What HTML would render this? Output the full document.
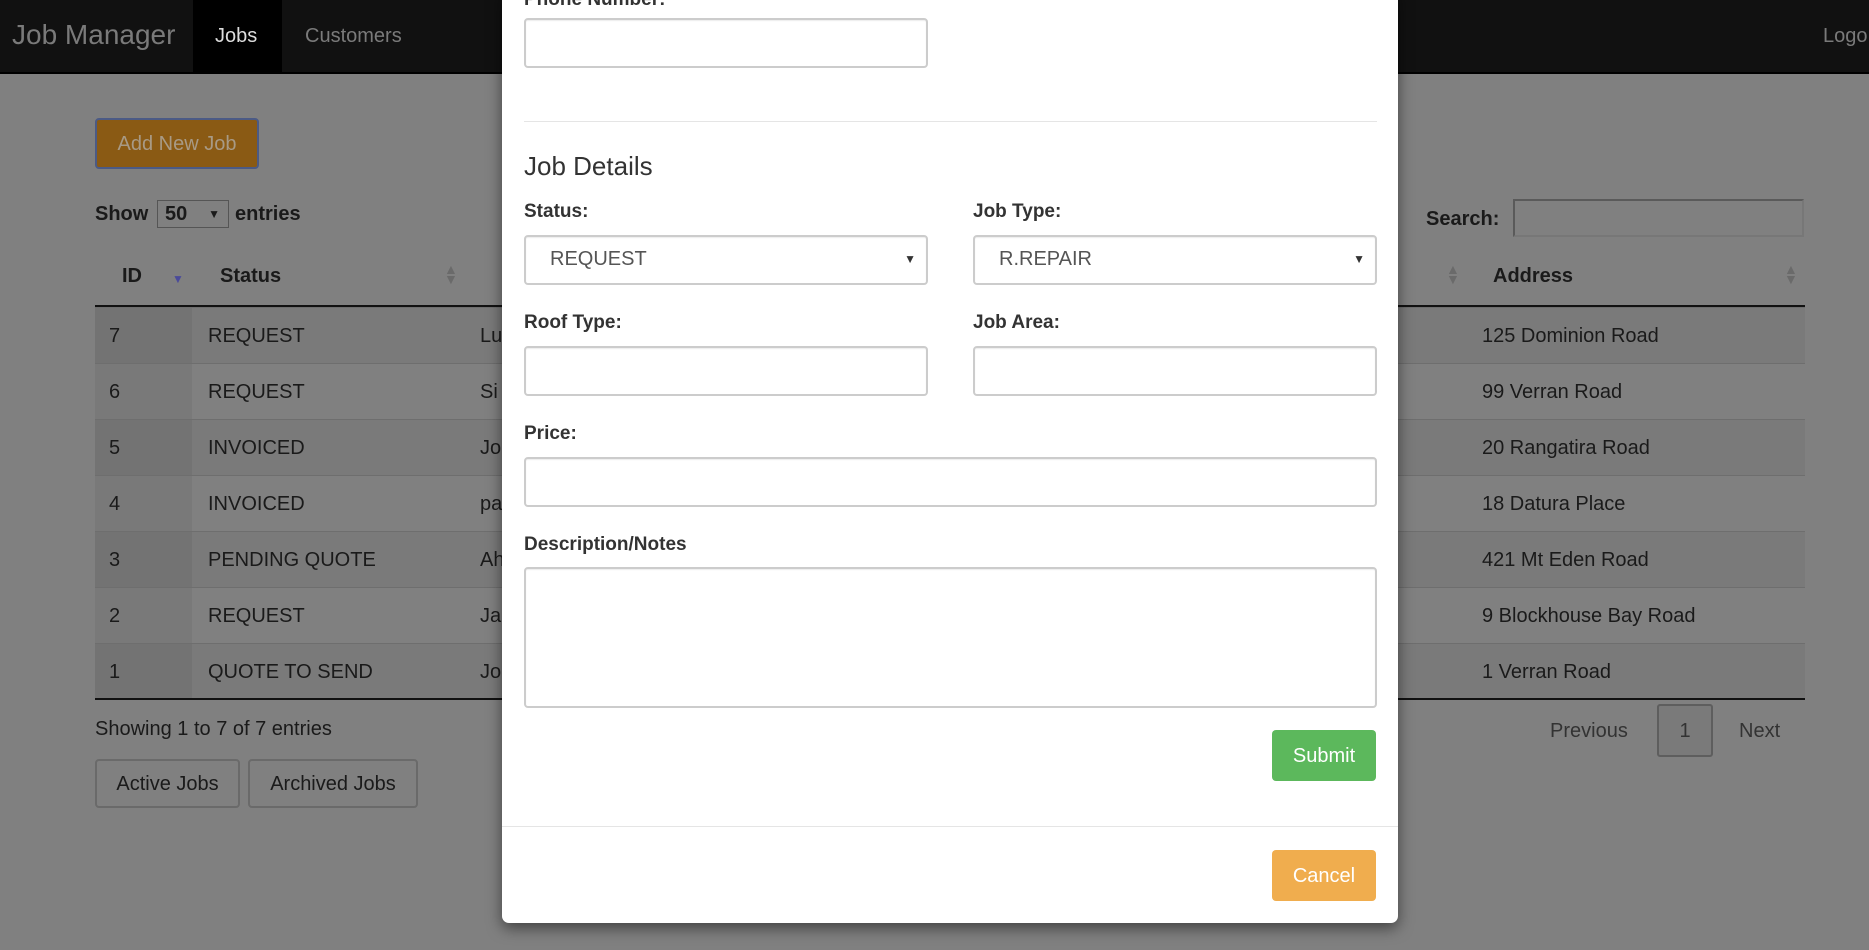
<!DOCTYPE html>
<html><head><meta charset="utf-8"><style>
*{box-sizing:border-box;margin:0;padding:0}
body{width:1869px;height:950px;overflow:hidden;background:#808080;font-family:"Liberation Sans",Arial,sans-serif;color:#1a1a1a;position:relative}
.a{position:absolute}
.nav{left:0;top:0;width:1869px;height:74px;background:#111;border-bottom:2px solid #000}
.row{left:95px;width:1710px;height:56px;border-top:1px solid #6e6e6e;font-size:20px;line-height:57px}
.row.odd{background:#7a7a7a}
.row .id{position:absolute;left:0;top:0;width:97px;height:55px;background:rgba(0,0,0,0.05);padding-left:14px}
.row .st{position:absolute;left:113px}
.row .nm{position:absolute;left:385px}
.row .ad{position:absolute;left:1387px}
.modal{left:502px;top:-10px;width:896px;height:933px;background:#fff;border-radius:0 0 7px 7px;box-shadow:0 5px 15px rgba(0,0,0,.5)}
.inp{position:absolute;border:2px solid #ccc;border-radius:4px;background:#fff;box-shadow:inset 0 1px 1px rgba(0,0,0,.075)}
.lbl{position:absolute;font-weight:bold;font-size:19px;color:#333}
.sel{font-size:20px;color:#555;line-height:45px;padding-left:24px}
.sel:after{content:"▼";position:absolute;right:10px;top:0;font-size:12px;color:#333}
.btn{position:absolute;border-radius:4px;color:#fff;font-size:20px;text-align:center}
</style></head><body>
<div class="a nav"></div>
<div class="a" style="left:12px;top:19px;font-size:28px;color:#7a7a7a">Job Manager</div>
<div class="a" style="left:193px;top:0;width:89px;height:74px;background:#000"></div>
<div class="a" style="left:215px;top:25px;font-size:20px;color:#ddd">Jobs</div>
<div class="a" style="left:305px;top:25px;font-size:20px;color:#7a7a7a">Customers</div>
<div class="a" style="left:1823px;top:25px;font-size:20px;color:#7a7a7a">Logo</div>

<div class="a" style="left:95px;top:118px;width:164px;height:51px;background:#8a5a14;border:2px solid #4b5a85;border-radius:4px;color:#a89a85;font-size:20px;line-height:48px;text-align:center">Add New Job</div>
<div class="a" style="left:95px;top:203px;font-size:20px;font-weight:bold">Show</div>
<div class="a" style="left:157px;top:200px;width:72px;height:28px;border:1px solid #555;font-size:20px;font-weight:bold;padding-left:7px;line-height:27px">50<span style="position:absolute;right:8px;font-size:12px">▼</span></div>
<div class="a" style="left:235px;top:203px;font-size:20px;font-weight:bold">entries</div>
<div class="a" style="left:1426px;top:208px;font-size:20px;font-weight:bold">Search:</div>
<div class="a" style="left:1513px;top:199px;width:291px;height:38px;border:2px solid #5a5a5a;border-right-color:#777;border-bottom-color:#777"></div>

<div class="a" style="left:122px;top:265px;font-size:20px;font-weight:bold">ID</div>
<div class="a" style="left:172px;top:272px;font-size:12px;color:#4a4a9a">▼</div>
<div class="a" style="left:220px;top:265px;font-size:20px;font-weight:bold">Status</div>
<div class="a" style="left:444px;top:264px;font-size:14px;color:#6a6a6a;line-height:10px">▲<br>▼</div>
<div class="a" style="left:1446px;top:264px;font-size:14px;color:#6a6a6a;line-height:10px">▲<br>▼</div>
<div class="a" style="left:1493px;top:265px;font-size:20px;font-weight:bold">Address</div>
<div class="a" style="left:1784px;top:264px;font-size:14px;color:#6a6a6a;line-height:10px">▲<br>▼</div>
<div class="a" style="left:95px;top:305px;width:1710px;height:2px;background:#111"></div>

<div class="a row odd" style="top:307px"><span class="id">7</span><span class="st">REQUEST</span><span class="nm">Lu</span><span class="ad">125 Dominion Road</span></div>
<div class="a row" style="top:363px"><span class="id">6</span><span class="st">REQUEST</span><span class="nm">Si</span><span class="ad">99 Verran Road</span></div>
<div class="a row odd" style="top:419px"><span class="id">5</span><span class="st">INVOICED</span><span class="nm">Jo</span><span class="ad">20 Rangatira Road</span></div>
<div class="a row" style="top:475px"><span class="id">4</span><span class="st">INVOICED</span><span class="nm">pa</span><span class="ad">18 Datura Place</span></div>
<div class="a row odd" style="top:531px"><span class="id">3</span><span class="st">PENDING QUOTE</span><span class="nm">Ah</span><span class="ad">421 Mt Eden Road</span></div>
<div class="a row" style="top:587px"><span class="id">2</span><span class="st">REQUEST</span><span class="nm">Ja</span><span class="ad">9 Blockhouse Bay Road</span></div>
<div class="a row odd" style="top:643px"><span class="id">1</span><span class="st">QUOTE TO SEND</span><span class="nm">Jo</span><span class="ad">1 Verran Road</span></div>
<div class="a" style="left:95px;top:698px;width:1710px;height:2px;background:#111"></div>

<div class="a" style="left:95px;top:718px;font-size:20px">Showing 1 to 7 of 7 entries</div>
<div class="a" style="left:95px;top:759px;width:145px;height:49px;border:2px solid #6a6a6a;border-radius:4px;font-size:20px;line-height:46px;text-align:center">Active Jobs</div>
<div class="a" style="left:248px;top:759px;width:170px;height:49px;border:2px solid #6a6a6a;border-radius:4px;font-size:20px;line-height:46px;text-align:center">Archived Jobs</div>
<div class="a" style="left:1550px;top:720px;font-size:20px;color:#333">Previous</div>
<div class="a" style="left:1657px;top:704px;width:56px;height:53px;border:2px solid #5e5e5e;border-radius:3px;background:#7a7a7a;font-size:20px;line-height:50px;text-align:center;color:#333">1</div>
<div class="a" style="left:1739px;top:720px;font-size:20px;color:#333">Next</div>

<div class="a modal"></div>
<div class="lbl" style="left:524px;top:-11px">Phone Number:</div>
<div class="inp" style="left:524px;top:18px;width:404px;height:50px"></div>
<div class="a" style="left:524px;top:121px;width:853px;height:1px;background:#e5e5e5"></div>
<div class="a" style="left:524px;top:151px;font-size:26px;color:#333">Job Details</div>
<div class="lbl" style="left:524px;top:201px">Status:</div>
<div class="lbl" style="left:973px;top:201px">Job Type:</div>
<div class="inp sel" style="left:524px;top:235px;width:404px;height:50px">REQUEST</div>
<div class="inp sel" style="left:973px;top:235px;width:404px;height:50px">R.REPAIR</div>
<div class="lbl" style="left:524px;top:312px">Roof Type:</div>
<div class="lbl" style="left:973px;top:312px">Job Area:</div>
<div class="inp" style="left:524px;top:346px;width:404px;height:50px"></div>
<div class="inp" style="left:973px;top:346px;width:404px;height:50px"></div>
<div class="lbl" style="left:524px;top:423px">Price:</div>
<div class="inp" style="left:524px;top:457px;width:853px;height:50px"></div>
<div class="lbl" style="left:524px;top:534px">Description/Notes</div>
<div class="inp" style="left:524px;top:567px;width:853px;height:141px"></div>
<div class="btn" style="left:1272px;top:730px;width:104px;height:51px;background:#5cb85c;line-height:52px">Submit</div>
<div class="a" style="left:502px;top:826px;width:896px;height:1px;background:#e5e5e5"></div>
<div class="btn" style="left:1272px;top:850px;width:104px;height:51px;background:#f0ad4e;line-height:52px">Cancel</div>
</body></html>
